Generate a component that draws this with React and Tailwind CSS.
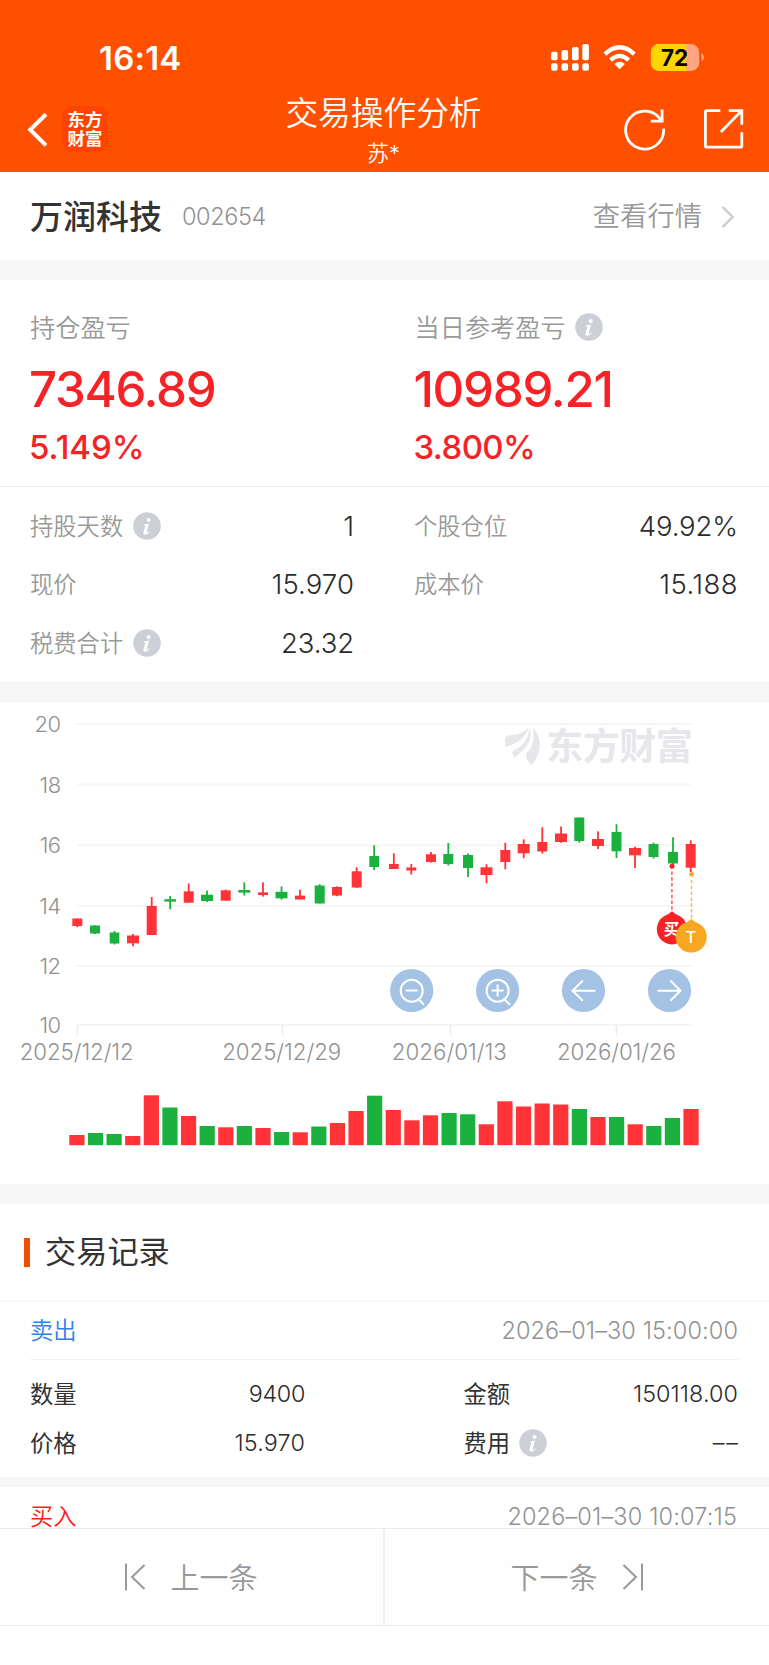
import React from "react";

const RED = "#ff3338";
const GREEN = "#1bb13f";

// [direction, body left, body right, body top, body bottom, high, low]
const candles = [
  ["r", 72.3, 82.3, 918.5, 926, 918.5, 927.3],
  ["g", 90, 100, 925.5, 933.5, 925.2, 934],
  ["g", 109.7, 119.3, 932.5, 943.5, 931, 944.5],
  ["r", 127, 139, 935.5, 943.3, 934, 946.3],
  ["r", 146.7, 156.7, 906, 935, 897, 935],
  ["g", 164.3, 176, 899.2, 901.6, 896, 909.3],
  ["r", 183.7, 193.7, 891.3, 902.7, 883.5, 902.7],
  ["g", 201, 213, 894.7, 901, 890.5, 902],
  ["r", 220.7, 230.7, 890.3, 900.7, 889.5, 900.7],
  ["g", 238.3, 250.3, 890, 892.6, 882.3, 895.6],
  ["r", 258, 268, 892.4, 895, 882.3, 896.6],
  ["g", 275.5, 287.5, 891.8, 898.3, 886.5, 899.6],
  ["r", 295, 305, 895.6, 899.5, 889.7, 899.5],
  ["g", 314.7, 324.7, 885.5, 903.5, 884.2, 903.5],
  ["r", 332, 342, 887, 895.5, 886.3, 896.2],
  ["r", 351.7, 361.7, 871.3, 887.5, 867.2, 888],
  ["g", 369.3, 379, 856, 867, 845.3, 870],
  ["r", 389, 398.7, 864, 869, 853.3, 869],
  ["r", 406.3, 416.3, 867.5, 870.5, 864, 874.5],
  ["r", 426, 436, 854.3, 862, 852, 862.6],
  ["g", 443.3, 453.3, 854, 864, 843, 865.5],
  ["g", 463, 473, 855, 868, 853.5, 877],
  ["r", 480.5, 492.5, 867.3, 875, 864.3, 883.2],
  ["r", 500.3, 510.3, 850, 862, 842.7, 869.3],
  ["r", 517.7, 529.7, 844, 853.3, 839.3, 858.2],
  ["r", 537.3, 547.3, 842, 851.5, 827.3, 853.5],
  ["r", 555, 567, 833.5, 842, 826.5, 842.8],
  ["g", 574.3, 584.3, 817.5, 841, 817.5, 842.6],
  ["r", 592, 604, 839, 846, 831.3, 849],
  ["g", 611.5, 621.5, 832, 851.3, 824.3, 858],
  ["r", 629, 641, 848, 855.3, 846.7, 868],
  ["g", 648.5, 658.5, 844, 857, 842.6, 858.6],
  ["g", 668, 678, 852, 863.5, 837.3, 865],
  ["r", 685.7, 695.7, 844, 867.7, 840.3, 872],
];

const volumeTops = [
  1135, 1133, 1134, 1136, 1095.3, 1107.5, 1116, 1126, 1127.3, 1126, 1128, 1132,
  1132.3, 1126.5, 1123, 1111, 1095.7, 1110, 1120.3, 1115.3, 1113, 1114.3, 1124.3,
  1101.3, 1106.5, 1103.5, 1104.5, 1109, 1117, 1117, 1124.3, 1126, 1118, 1109,
];

const yAxis = [
  ["20", 724], ["18", 784.6], ["16", 845.2], ["14", 905.8], ["12", 966], ["10", 1025],
];

const xAxis = [
  ["2025/12/12", 77.5, 76.7, 114],
  ["2025/12/29", 282.5, 281.7, 119],
  ["2026/01/13", 450.5, 449.3, 115],
  ["2026/01/26", 616.5, 616.5, 119],
];

function Info({ className = "" }) {
  return (
    <svg className={"h-7 w-7 shrink-0 " + className} viewBox="0 0 28 28">
      <circle cx="14" cy="14" r="13.8" fill="#ccd0d6" />
      <circle cx="15.6" cy="7.9" r="2" fill="#fff" />
      <path d="M10.8 12.4 L16.2 11.4 L13.6 20 Q13.4 21.3 14.6 20.6 L16.3 19.3 L16.7 19.9 Q14.2 22.9 12 22.8 Q9.9 22.6 10.5 20.2 L12.4 13.7 L10.7 13.3 Z" fill="#fff" />
    </svg>
  );
}

function StatusIcons() {
  return (
    <svg className="h-[28px] w-[154px]" viewBox="551 44 154 28">
      <g fill="#fff">
        <rect x="551" y="51.7" width="6.6" height="8.6" rx="2" />
        <rect x="561.5" y="50" width="6.6" height="10.3" rx="2" />
        <rect x="572" y="47" width="6.6" height="13.3" rx="2" />
        <rect x="582.3" y="44" width="6.6" height="16.3" rx="2" />
        <rect x="551" y="63.2" width="6.6" height="7.5" rx="2" />
        <rect x="561.5" y="63.2" width="6.6" height="7.5" rx="2" />
        <rect x="572" y="63.2" width="6.6" height="7.5" rx="2" />
        <rect x="582.3" y="63.2" width="6.6" height="7.5" rx="2" />
        <path d="M614.3 64 Q619.6 59.6 624.9 64 L619.6 69.3 Z" />
      </g>
      <g fill="none" stroke="#fff" strokeWidth="4.2">
        <path d="M604.9 54.1 Q619.6 40.5 634.3 54.1" />
        <path d="M610.5 60.1 Q619.6 51.7 628.7 60.1" />
      </g>
      <clipPath id="battery"><rect x="650.7" y="44" width="48.6" height="27" rx="8.5" /></clipPath>
      <g clipPath="url(#battery)">
        <rect x="650.7" y="44" width="49" height="27" fill="#ffa680" />
        <rect x="650.7" y="44" width="35.5" height="27" fill="#ffd500" />
      </g>
      <path d="M701.3 53.3 Q704 54.3 704 57.3 Q704 60 701.3 61 Z" fill="#ffa680" />
      <text x="674.6" y="65.7" textAnchor="middle" className="font-['Inter',sans-serif] text-[22.5px] font-bold" fill="#000">72</text>
    </svg>
  );
}

function Header() {
  return (
    <header className="h-[172px] bg-[#ff5000] text-white">
      <div className="flex h-[88px] items-end justify-between pr-[64px] pl-[99px]">
        <span className="mb-[10.5px] text-[33px] leading-10 font-semibold tracking-[0.2px]">16:14</span>
        <div className="mb-4"><StatusIcons /></div>
      </div>
      <div className="flex h-[84px] pr-[24px] pl-[27px]">
        <div className="flex w-[196px] pt-[18px]">
          <svg className="mt-[6px] h-[36px] w-[22px]" viewBox="27 112 22 36" fill="none" stroke="#fff" strokeWidth="4">
            <path d="M46 114.3 L30.2 129.7 L46 145.3" />
          </svg>
          <div className="ml-[13px] flex h-[46px] w-[46px] flex-col items-center justify-center rounded-[11px] bg-[#ff4300] text-[17.5px] leading-[19px] font-bold">
            <span>东方</span>
            <span>财富</span>
          </div>
        </div>
        <div className="flex flex-1 flex-col items-center pr-[5px]">
          <div className="mt-[5px] text-[32.7px] leading-[40px] font-[350] whitespace-nowrap">交易操作分析</div>
          <div className="mt-[4px] text-[22px] leading-[32px] font-[350]">苏*</div>
        </div>
        <div className="flex w-[196px] items-start justify-end gap-[37px] pt-[19px]">
          <svg className="h-[44px] w-[42px]" viewBox="624 107.6 42 44" fill="none" stroke="#fff" strokeWidth="2.8">
            <path d="M661.4 121.7 A19 19 0 1 0 663.6 129.3" />
            <path d="M662.1 110 V121.7 H650.8" />
          </svg>
          <svg className="h-[44px] w-[42px]" viewBox="703 107 42 44" fill="none" stroke="#fff" strokeWidth="2.8">
            <path d="M720.3 110.6 H706.8 Q705.4 110.6 705.4 112 V145.8 Q705.4 147.2 706.8 147.2 H740.4 Q741.8 147.2 741.8 145.8 V132.3" />
            <path d="M728.8 110.6 H741.8 V124.7 M741.8 110.6 L720.8 132" />
          </svg>
        </div>
      </div>
    </header>
  );
}

function Summary({ label, info, value, percent, percentClass }) {
  return (
    <div className="flex w-1/2 flex-col pl-[30px]">
      <div className="mt-[31px] flex h-[32px] items-center text-[25.2px] leading-8 font-[350] text-[#999]">
        <span className="pt-px">{label}</span>
        {info && <Info className="ml-[9px]" />}
      </div>
      <div className="mt-[16px] -ml-px h-[60px] text-[49.2px] leading-[60px] font-medium tracking-[-1.3px] text-[#f62326]">{value}</div>
      <div className={"mt-[8px] -ml-px h-[40px] text-[33px] leading-[40px] font-medium text-[#f62326] " + percentClass}>{percent}</div>
    </div>
  );
}

function Stat({ label, info, value, valueClass = "tracking-[-0.1px]" }) {
  return (
    <div className="flex h-[58.5px] items-center">
      <span className="pt-[2px] text-[23.3px] font-[350] text-[#999]">{label}</span>
      {info && <Info className="ml-[9.5px]" />}
      <span className={"ml-auto text-[27.5px] font-[350] text-[#2b2b2b] " + valueClass}>{value}</span>
    </div>
  );
}

function RoundButton({ cx, children }) {
  return (
    <g>
      <circle cx={cx} cy="990.5" r="21.6" fill="#a4c2e4" />
      <g transform={`translate(${cx} 990.5)`} fill="none" stroke="#fff" strokeWidth="2">{children}</g>
    </g>
  );
}

function Chart() {
  return (
    <svg className="block h-[482px] w-[769px] font-['Inter',sans-serif]" viewBox="0 702 769 482">
      {yAxis.map(([t, y]) => (
        <g key={t}>
          <path d={`M77 ${y} H691`} stroke="#f5f5f5" strokeWidth="2" />
          <text x="60.5" y={y + 8} textAnchor="end" className="text-[22px] font-[350] tracking-[-0.6px]" fill="#929292">{t}</text>
        </g>
      ))}
      {xAxis.map(([t, tick, c, w]) => (
        <g key={t}>
          <path d={`M${tick} 1025 V1035`} stroke="#ececec" strokeWidth="1.4" />
          <text x={c - w / 2} y="1060.3" textLength={w} className="text-[22.3px] font-[350]" fill="#929292">{t}</text>
        </g>
      ))}
      <g fill="#e6e6eb">
        <path d="M505.3 747 Q503.5 738 508 735.5 Q520 735.5 528.5 728 Q524 742 505.3 747 Z" />
        <path d="M514.5 757.5 Q510.5 752 514.8 749.5 Q528 744 529.5 727.3 Q535 743 514.5 757.5 Z" />
        <path d="M532.5 727.5 Q539.5 734 540 745 Q539.5 756 531.5 765.5 Q523.5 756 527 752.5 Q536.5 744 532.5 727.5 Z" />
        <text x="546.3" y="760" textLength="146.5" className="font-['Noto_Sans_CJK_SC',sans-serif] text-[37px] font-bold">东方财富</text>
      </g>
      {candles.map(([d, l, r, top, bottom, high, low]) => {
        const c = (l + r) / 2;
        const color = d === "r" ? RED : GREEN;
        return (
          <g key={l} fill={color}>
            <rect x={l} y={top} width={r - l} height={bottom - top} />
            <rect x={c - 0.9} y={high} width="1.8" height={low - high} />
          </g>
        );
      })}
      {volumeTops.map((y, i) => (
        <rect key={i} x={69.3 + i * 18.61} y={y} width="15.2" height={1145.2 - y} fill={candles[i][0] === "r" ? RED : GREEN} />
      ))}
      <circle cx="672" cy="866.3" r="2.5" fill="#f62326" />
      <path d="M671.9 871.5 V911" stroke="#fb7176" strokeWidth="1.8" strokeDasharray="3.5 2.3" />
      <path d="M672 911.3 Q675 914.3 680.5 916.6 A15.2 15.2 0 1 1 663.5 916.6 Q669 914.3 672 911.3 Z" fill="#f62326" />
      <text x="671.5" y="935.3" textAnchor="middle" className="font-['Noto_Sans_CJK_SC',sans-serif] text-[15.5px] font-bold" fill="#fff">买</text>
      <circle cx="691.6" cy="874.3" r="2.4" fill="#f8a723" />
      <path d="M691.5 880 V919" stroke="#f8b84d" strokeWidth="1.5" strokeDasharray="3.5 2.3" />
      <path d="M691.2 919 Q694.5 922 699.8 924 A15.6 15.6 0 1 1 682.6 924 Q688 922 691.2 919 Z" fill="#f8a723" />
      <text x="690.9" y="943.3" textAnchor="middle" className="text-[16.5px] font-medium" fill="#fff">T</text>
      <RoundButton cx={411.7}>
        <circle cx="0" cy="0.3" r="11" />
        <path d="M-6 0 H6 M7 9 L12.4 14.3" />
      </RoundButton>
      <RoundButton cx={497.6}>
        <circle cx="0" cy="0.3" r="11" />
        <path d="M-6 0 H6 M0 -6 V6 M7 9 L12.4 14.3" />
      </RoundButton>
      <RoundButton cx={583.5}>
        <path d="M12 0.2 H-11 M-0.6 -10 L-11 0.2 L-0.6 10.2" />
      </RoundButton>
      <RoundButton cx={669.5}>
        <path d="M-12 0.2 H11 M0.8 -10 L11 0.2 L0.8 10.2" />
      </RoundButton>
    </svg>
  );
}

function RecordRow({ label, info, value, valueClass = "tracking-[-0.3px]" }) {
  return (
    <div className="flex h-[49px] items-center text-[23.3px] leading-8 text-[#333]">
      <span className="pt-px">{label}</span>
      {info && <Info className="ml-[9px]" />}
      <span className={"ml-auto font-[350] text-[#2b2b2b] " + valueClass}>{value}</span>
    </div>
  );
}

export default function App() {
  return (
    <div className="h-[1665px] w-[769px] overflow-hidden bg-white font-['Inter','Noto_Sans_CJK_SC',sans-serif]">
      <Header />
      <section className="flex h-[88px] items-center pt-[2px] pr-[34px] pl-[30px]">
        <h1 className="text-[33px] leading-10 font-medium text-[#333]">万润科技</h1>
        <span className="ml-[20px] text-[23.5px] font-[350] tracking-[-0.4px] text-[#929292]">002654</span>
        <span className="ml-auto text-[27.3px] font-[350] text-[#999]">查看行情</span>
        <svg className="ml-[19px] h-6 w-[14px]" viewBox="0 0 14 24" fill="none" stroke="#ccc" strokeWidth="2.4">
          <path d="M1.5 1.8 L11.6 12 L1.5 22.2" />
        </svg>
      </section>
      <div className="h-5 bg-[#f7f7f7]" />
      <section className="flex h-[207px] border-b border-[#efefef]">
        <Summary label="持仓盈亏" value="7346.89" percent="5.149%" percentClass="tracking-[0px]" />
        <Summary label="当日参考盈亏" info value="10989.21" percent="3.800%" percentClass="tracking-[-0.6px]" />
      </section>
      <section className="flex h-[195px] pt-[10px]">
        <div className="w-[385px] pr-[31px] pl-[30px]">
          <Stat label="持股天数" info value="1" />
          <Stat label="现价" value="15.970" valueClass="tracking-[0.1px]" />
          <Stat label="税费合计" info value="23.32" />
        </div>
        <div className="w-[384px] pr-[31px] pl-[29px]">
          <Stat label="个股仓位" value="49.92%" />
          <Stat label="成本价" value="15.188" valueClass="tracking-[0.4px]" />
        </div>
      </section>
      <div className="h-5 bg-[#f7f7f7]" />
      <Chart />
      <div className="h-5 bg-[#f7f7f7]" />
      <section className="h-[324px]">
        <div className="flex h-[98px] items-center border-b-2 border-[#f7f7f7] pl-[23.5px]">
          <span className="h-[29px] w-[6px] bg-[#ee5000]" />
          <h2 className="ml-[15.5px] text-[31.2px] leading-10 text-[#333]">交易记录</h2>
        </div>
        <div className="px-[30px]">
          <div className="flex h-[58px] items-center justify-between border-b border-[#f2f2f2]">
            <span className="pt-[2px] text-[23.3px] font-[350] text-[#2f80ed]">卖出</span>
            <span className="mr-px text-[23.5px] font-[350] tracking-[0.1px] text-[#929292]">2026–01–30 15:00:00</span>
          </div>
        </div>
        <div className="flex h-[117px] pt-[9.5px] pr-[31px] pl-[30px]">
          <div className="w-[275px]">
            <RecordRow label="数量" value="9400" />
            <RecordRow label="价格" value="15.970" valueClass="tracking-[0.2px]" />
          </div>
          <div className="ml-[158.5px] flex-1">
            <RecordRow label="金额" value="150118.00" valueClass="tracking-[0.1px]" />
            <RecordRow label="费用" info value="––" valueClass="mr-[-2px] tracking-[2px]" />
          </div>
        </div>
        <div className="h-[10px] bg-[#f7f7f7]" />
        <div className="flex h-[41px] items-end justify-between px-[30px] leading-[23px]">
          <span className="text-[23.3px] font-[350] text-[#ff1a1a]">买入</span>
          <span className="mr-[2px] text-[23.5px] font-[350] tracking-[0.15px] text-[#929292]">2026–01–30 10:07:15</span>
        </div>
      </section>
      <nav className="flex h-[98px] border-y border-[#ececec] bg-[#fefefe] text-[29px] font-[350] text-[#999]">
        <div className="flex w-[385px] items-center justify-center border-r-2 border-[#efefef] pr-px">
          <svg className="mr-[24px] h-[28px] w-[22px]" viewBox="0 0 22 28" fill="none" stroke="#999" strokeWidth="2">
            <path d="M2 0.5 V27.5 M20.5 2 L8 14 L20.5 26" />
          </svg>
          <span className="pt-[3px]">上一条</span>
        </div>
        <div className="flex w-[384px] items-center justify-center">
          <span className="pt-[3px]">下一条</span>
          <svg className="ml-[24px] h-[28px] w-[22px]" viewBox="0 0 22 28" fill="none" stroke="#999" strokeWidth="2">
            <path d="M20 0.5 V27.5 M1.5 2 L14 14 L1.5 26" />
          </svg>
        </div>
      </nav>
    </div>
  );
}
